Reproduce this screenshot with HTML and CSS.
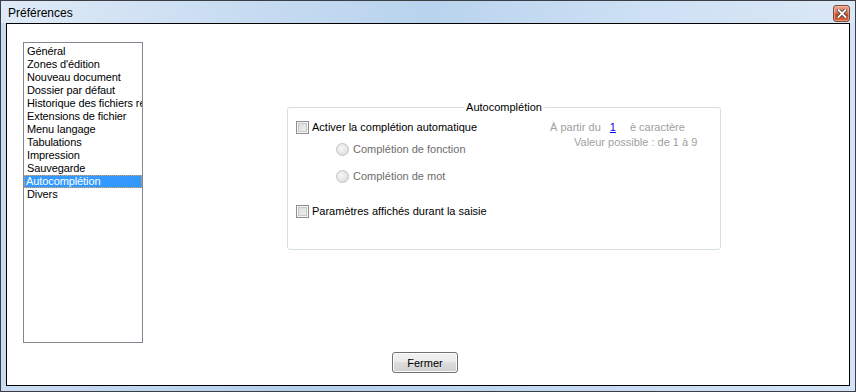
FILE: index.html
```html
<!DOCTYPE html>
<html lang="fr">
<head>
    <meta charset="UTF-8">
    <title>Préférences</title>
    <link rel="stylesheet" href="styles.css">
</head>
<body>
    <div class="window">
        <div class="titlebar">
            <span class="title">Préférences</span>
            <span class="close-btn">
                <svg width="10" height="9" viewBox="0 0 10 9">
                    <path d="M1.5 1 L8.5 8 M8.5 1 L1.5 8" stroke="#3a3a3a" stroke-width="3.4" stroke-linecap="square"/>
                    <path d="M1.5 1 L8.5 8 M8.5 1 L1.5 8" stroke="#ffffff" stroke-width="1.8" stroke-linecap="square"/>
                </svg>
            </span>
        </div>

        <div class="client">
            <div class="main">
                <ul class="category-list">
                    <li>Général</li>
                    <li>Zones d'édition</li>
                    <li>Nouveau document</li>
                    <li>Dossier par défaut</li>
                    <li>Historique des fichiers récents</li>
                    <li>Extensions de fichier</li>
                    <li>Menu langage</li>
                    <li>Tabulations</li>
                    <li>Impression</li>
                    <li>Sauvegarde</li>
                    <li class="selected">Autocomplétion</li>
                    <li>Divers</li>
                </ul>

                <div class="group">
                    <span class="group-title">Autocomplétion</span>
                    <div class="group-body">
                        <div class="options">
                            <div class="option row-check">
                                <span class="checkbox"></span>
                                <span>Activer la complétion automatique</span>
                            </div>
                            <div class="option row-radio disabled">
                                <span class="radio"></span>
                                <span>Complétion de fonction</span>
                            </div>
                            <div class="option row-radio disabled">
                                <span class="radio"></span>
                                <span>Complétion de mot</span>
                            </div>
                            <div class="option row-check2">
                                <span class="checkbox"></span>
                                <span>Paramètres affichés durant la saisie</span>
                            </div>
                        </div>
                        <div class="range">
                            <div class="range-line">
                                <span>À partir du</span>
                                <span class="range-value">1</span>
                                <span>è caractère</span>
                            </div>
                            <div class="range-hint">Valeur possible : de 1 à 9</div>
                        </div>
                    </div>
                </div>
            </div>

            <div class="footer">
                <button class="button">Fermer</button>
            </div>
        </div>
    </div>
</body>
</html>
```

FILE: styles.css
```css
* {
    margin: 0;
    padding: 0;
    box-sizing: border-box;
}

body {
    background-color: #ffffff;
    font-family: "Liberation Sans", Arial, sans-serif;
    font-size: 11px;
    color: #000000;
}

.window {
    width: 856px;
    height: 392px;
    border: 1px solid #3b3f45;
    padding: 0 5px 5px 5px;
    background: linear-gradient(90deg, #c9dcf1 0%, #b4cfec 35%, #c3d9f1 65%, #d3e4f6 100%);
    display: flex;
    flex-direction: column;
}

.titlebar {
    height: 22px;
    display: flex;
    align-items: center;
    justify-content: space-between;
    margin: 0 -5px;
    padding: 0 5px 0 7px;
    background: linear-gradient(90deg, #dfeaf7 0%, #c6dbf1 30%, #b9d3ee 50%, #cde0f4 75%, #dbe8f6 100%);
}

.title {
    font-size: 12px;
    color: #000000;
    padding-top: 1px;
}

.close-btn {
    width: 17px;
    height: 17px;
    margin-top: 3px;
    border: 1px solid #7b4a40;
    border-radius: 3px;
    background: linear-gradient(180deg, #eea48c 0%, #de7558 45%, #c9472a 55%, #d8653d 100%);
    display: flex;
    align-items: center;
    justify-content: center;
    box-shadow: inset 0 0 0 1px rgba(255, 215, 195, 0.45);
}

.client {
    flex: 1;
    border: 1px solid #000000;
    background-color: #ffffff;
    display: flex;
    flex-direction: column;
}

.main {
    display: flex;
    align-items: flex-start;
}

.category-list {
    list-style: none;
    width: 120px;
    height: 301px;
    margin: 18px 0 0 16px;
    padding-top: 2px;
    border: 1px solid #828790;
    overflow: hidden;
}

.category-list li {
    height: 13px;
    line-height: 13px;
    padding-left: 2px;
    white-space: nowrap;
    letter-spacing: -0.1px;
    border: 1px solid transparent;
    border-width: 0 1px;
}

.category-list li.selected {
    background-color: #3399ff;
    color: #ffffff;
    border: 1px dotted #f2a24b;
    line-height: 11px;
    padding-left: 1px;
}

.group {
    position: relative;
    width: 434px;
    height: 143px;
    margin: 83px 0 0 144px;
    border: 1px solid #d5dfe5;
    border-radius: 3px;
}

.group-title {
    position: absolute;
    top: -8px;
    left: 50%;
    transform: translateX(-50%);
    padding: 0 2px;
    background-color: #ffffff;
    line-height: 14px;
    white-space: nowrap;
}

.group-body {
    display: flex;
    padding: 12px 0 0 8px;
}

.options {
    width: 254px;
    display: flex;
    flex-direction: column;
}

.option {
    display: flex;
    align-items: center;
    gap: 3px;
    height: 14px;
}

.row-radio {
    margin-top: 8px;
    padding-left: 40px;
}

.row-radio + .row-radio {
    margin-top: 13px;
}

.row-check2 {
    margin-top: 21px;
}

.disabled {
    color: #6d6d6d;
}

.checkbox {
    width: 13px;
    height: 13px;
    border: 1px solid #8e8f8f;
    background: linear-gradient(135deg, #d9d9d9 0%, #f2f2f2 100%);
    box-shadow: inset 0 0 0 1px #f4f4f4, inset 0 0 0 2px #c9c9c9;
}

.radio {
    width: 13px;
    height: 13px;
    border: 1px solid #c3c3c3;
    border-radius: 50%;
    background: radial-gradient(circle at 40% 40%, #f6f6f6 0%, #e1e1e1 70%);
    margin-right: 1px;
}

.range {
    color: #a0a0a0;
    display: flex;
    flex-direction: column;
    align-items: flex-start;
}

.range-line {
    display: flex;
    height: 14px;
    align-items: center;
}

.range-value {
    color: #0000ee;
    text-decoration: underline;
    margin: 0 14px 0 9px;
}

.range-hint {
    margin-top: 2px;
    margin-left: 24px;
}

.footer {
    display: flex;
    justify-content: center;
    padding-right: 6px;
    margin-top: 9px;
}

.button {
    width: 66px;
    height: 21px;
    border: 1px solid #707070;
    border-radius: 3px;
    background: linear-gradient(180deg, #f2f2f2 0%, #ebebeb 45%, #dddddd 50%, #cfcfcf 100%);
    box-shadow: inset 0 0 0 1px #fcfcfc;
    font-family: "Liberation Sans", Arial, sans-serif;
    font-size: 11px;
    color: #000000;
}
```
